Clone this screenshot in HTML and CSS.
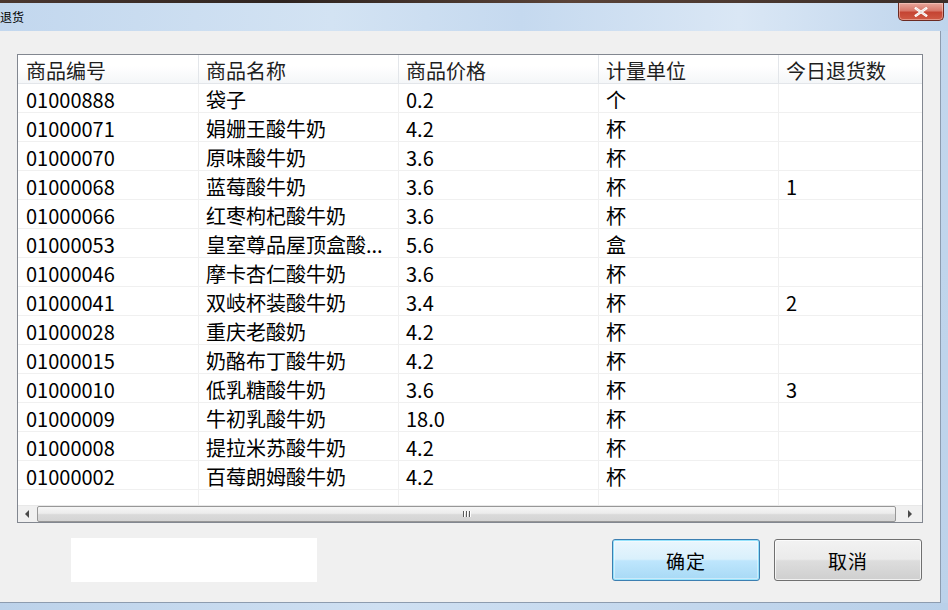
FILE: index.html
```html
<!DOCTYPE html>
<html lang="zh">
<head>
<meta charset="utf-8">
<title>退货</title>
<link rel="stylesheet" href="styles.css">
</head>
<body>
<div class="desk"></div>
<div class="window">
  <div class="titlebar">
    <span class="title">退货</span>
    <button class="close" aria-label="关闭">
      <svg width="14" height="10" viewBox="0 0 14 10"><path d="M2 1.5 L12 8.5 M12 1.5 L2 8.5" stroke="#fff" stroke-width="2.6" stroke-linecap="square"/><path d="M2 1.5 L12 8.5 M12 1.5 L2 8.5" stroke="#5a1a14" stroke-width="0.6" fill="none" opacity="0.25"/></svg>
    </button>
  </div>
  <div class="body">
    <div class="client">
      <div class="grid">
        <div class="row head">
          <div class="c c1">商品编号</div><div class="c c2">商品名称</div><div class="c c3">商品价格</div><div class="c c4">计量单位</div><div class="c c5">今日退货数</div>
        </div>
        <div class="row"><div class="c c1">01000888</div><div class="c c2">袋子</div><div class="c c3">0.2</div><div class="c c4">个</div><div class="c c5"></div></div>
        <div class="row"><div class="c c1">01000071</div><div class="c c2">娟姗王酸牛奶</div><div class="c c3">4.2</div><div class="c c4">杯</div><div class="c c5"></div></div>
        <div class="row"><div class="c c1">01000070</div><div class="c c2">原味酸牛奶</div><div class="c c3">3.6</div><div class="c c4">杯</div><div class="c c5"></div></div>
        <div class="row"><div class="c c1">01000068</div><div class="c c2">蓝莓酸牛奶</div><div class="c c3">3.6</div><div class="c c4">杯</div><div class="c c5">1</div></div>
        <div class="row"><div class="c c1">01000066</div><div class="c c2">红枣枸杞酸牛奶</div><div class="c c3">3.6</div><div class="c c4">杯</div><div class="c c5"></div></div>
        <div class="row"><div class="c c1">01000053</div><div class="c c2">皇室尊品屋顶盒酸...</div><div class="c c3">5.6</div><div class="c c4">盒</div><div class="c c5"></div></div>
        <div class="row"><div class="c c1">01000046</div><div class="c c2">摩卡杏仁酸牛奶</div><div class="c c3">3.6</div><div class="c c4">杯</div><div class="c c5"></div></div>
        <div class="row"><div class="c c1">01000041</div><div class="c c2">双岐杯装酸牛奶</div><div class="c c3">3.4</div><div class="c c4">杯</div><div class="c c5">2</div></div>
        <div class="row"><div class="c c1">01000028</div><div class="c c2">重庆老酸奶</div><div class="c c3">4.2</div><div class="c c4">杯</div><div class="c c5"></div></div>
        <div class="row"><div class="c c1">01000015</div><div class="c c2">奶酪布丁酸牛奶</div><div class="c c3">4.2</div><div class="c c4">杯</div><div class="c c5"></div></div>
        <div class="row"><div class="c c1">01000010</div><div class="c c2">低乳糖酸牛奶</div><div class="c c3">3.6</div><div class="c c4">杯</div><div class="c c5">3</div></div>
        <div class="row"><div class="c c1">01000009</div><div class="c c2">牛初乳酸牛奶</div><div class="c c3">18.0</div><div class="c c4">杯</div><div class="c c5"></div></div>
        <div class="row"><div class="c c1">01000008</div><div class="c c2">提拉米苏酸牛奶</div><div class="c c3">4.2</div><div class="c c4">杯</div><div class="c c5"></div></div>
        <div class="row"><div class="c c1">01000002</div><div class="c c2">百莓朗姆酸牛奶</div><div class="c c3">4.2</div><div class="c c4">杯</div><div class="c c5"></div></div>
        <div class="row filler"><div class="c c1"></div><div class="c c2"></div><div class="c c3"></div><div class="c c4"></div><div class="c c5"></div></div>
        <div class="hscroll">
          <div class="arrow left"><svg width="5" height="8" viewBox="0 0 5 8"><path d="M4 0 L0 4 L4 8 Z" fill="#4a4a4a"/></svg></div>
          <div class="thumb"><span class="grip"></span><span class="grip"></span><span class="grip"></span></div>
          <div class="arrow right"><svg width="5" height="8" viewBox="0 0 5 8"><path d="M1 0 L5 4 L1 8 Z" fill="#4a4a4a"/></svg></div>
        </div>
      </div>
      <div class="actions">
        <div class="blank"></div>
        <button class="btn primary">确定</button>
        <button class="btn">取消</button>
      </div>
    </div>
    <div class="frame-right"></div>
  </div>
  <div class="frame-bottom"></div>
</div>
</body>
</html>
```

FILE: styles.css
```css
html, body {
  margin: 0;
  padding: 0;
  width: 948px;
  height: 610px;
  overflow: hidden;
  background: #3b2b26;
  font-family: "Noto Sans CJK SC", "Noto Sans", sans-serif;
}

.desk {
  height: 3px;
  background: linear-gradient(to right, #4a3730, #2e2420 30%, #5a4338 60%, #3a2d28);
}

.window {
  display: flex;
  flex-direction: column;
  height: 607px;
  background: linear-gradient(to bottom, #c3d7ed, #bcd2ea);
}

.titlebar {
  height: 28px;
  display: flex;
  align-items: flex-start;
  justify-content: space-between;
  background: linear-gradient(to right, #c2d7ee 0%, #d3e3f3 35%, #c5d9ef 55%, #dae7f5 78%, #bed4ec 100%);
}

.title {
  font-size: 12px;
  line-height: 14px;
  margin-top: 7px;
  margin-left: 0;
  color: #000;
}

.close {
  width: 46px;
  height: 18px;
  margin-right: 4px;
  padding: 0;
  border: 1px solid #6b2a22;
  border-top: none;
  border-radius: 0 0 5px 5px;
  background: linear-gradient(to bottom, #e8a79c 0%, #d8786a 45%, #c54433 55%, #cf5a45 100%);
  box-shadow: inset 0 0 0 1px rgba(255, 220, 210, 0.45);
  display: flex;
  align-items: center;
  justify-content: center;
}

.body {
  display: flex;
  height: 572px;
}

.client {
  width: 941px;
  height: 572px;
  box-sizing: border-box;
  background: #f0f0f0;
  border-right: 1px solid #8d9caf;
  border-bottom: 1px solid #8d9caf;
  padding: 23px 0 0 17px;
}

.frame-right {
  flex: 1;
}

.frame-bottom {
  flex: 1;
  background: linear-gradient(to right, #bcd2ea, #cfe0f2 40%, #b9d0e9);
}

.grid {
  width: 906px;
  height: 469px;
  box-sizing: border-box;
  border: 1px solid #828790;
  background: #fff;
  display: flex;
  flex-direction: column;
  overflow: hidden;
}

.row {
  display: flex;
  height: 29px;
  flex: none;
  border-bottom: 1px solid #f0f0f0;
  box-sizing: border-box;
  font-size: 20px;
  line-height: 24px;
  color: #000;
}

.row.head {
  border-bottom: 1px solid #e3e6ea;
  background: linear-gradient(to bottom, #ffffff 0%, #ffffff 40%, #f4f6f8 100%);
  color: #1e1e1e;
}

.row.filler {
  flex: 1;
  border-bottom: none;
}

.c {
  box-sizing: border-box;
  padding: 4px 0 0 7px;
  white-space: nowrap;
  border-right: 1px solid #f0f0f0;
}

.head .c {
  border-right: 1px solid #e3e6ea;
}

.c1 { width: 181px; padding-left: 8px; }
.c2 { width: 200px; }
.c3 { width: 200px; }
.c4 { width: 180px; }
.c5 { flex: 1; }
.row .c5 { border-right: none; }

.hscroll {
  height: 17px;
  flex: none;
  display: flex;
  background: #f0f0f0;
  border-top: 1px solid #e8e8e8;
  box-sizing: border-box;
}

.arrow {
  width: 18px;
  display: flex;
  align-items: center;
  justify-content: center;
}

.arrow.right {
  width: 26px;
}

.thumb {
  flex: 1;
  margin: 0 0 0 1px;
  box-sizing: border-box;
  border: 1px solid #979797;
  border-radius: 2px;
  background: linear-gradient(to bottom, #f6f6f6 0%, #ececec 45%, #dadada 55%, #d4d4d4 100%);
  display: flex;
  align-items: center;
  justify-content: center;
  gap: 2px;
}

.grip {
  width: 1px;
  height: 6px;
  background: #5a5a5a;
  box-shadow: 1px 0 0 #fff;
}

.actions {
  display: flex;
  align-items: flex-start;
  margin-top: 15px;
}

.blank {
  width: 246px;
  height: 44px;
  background: #fff;
  margin-left: 54px;
}

.btn {
  width: 148px;
  height: 42px;
  margin-top: 1px;
  box-sizing: border-box;
  border: 1px solid #707070;
  border-radius: 3px;
  background: linear-gradient(to bottom, #f2f2f2 0%, #ebebeb 48%, #dddddd 52%, #cfcfcf 100%);
  box-shadow: inset 0 0 0 1px rgba(255, 255, 255, 0.7);
  font-family: "Noto Sans CJK SC", sans-serif;
  font-size: 19px;
  color: #000;
  padding: 0;
  letter-spacing: 1px;
}

.btn.primary {
  margin-left: 295px;
  border-color: #3c7fb1;
  background: linear-gradient(to bottom, #eaf6fd 0%, #d9f0fc 48%, #bee6fd 52%, #a7d9f5 100%);
  box-shadow: inset 0 0 0 1px #94e2fc, inset 0 0 0 2px rgba(255,255,255,0.4);
}

.btn + .btn {
  margin-left: 14px;
}
```
